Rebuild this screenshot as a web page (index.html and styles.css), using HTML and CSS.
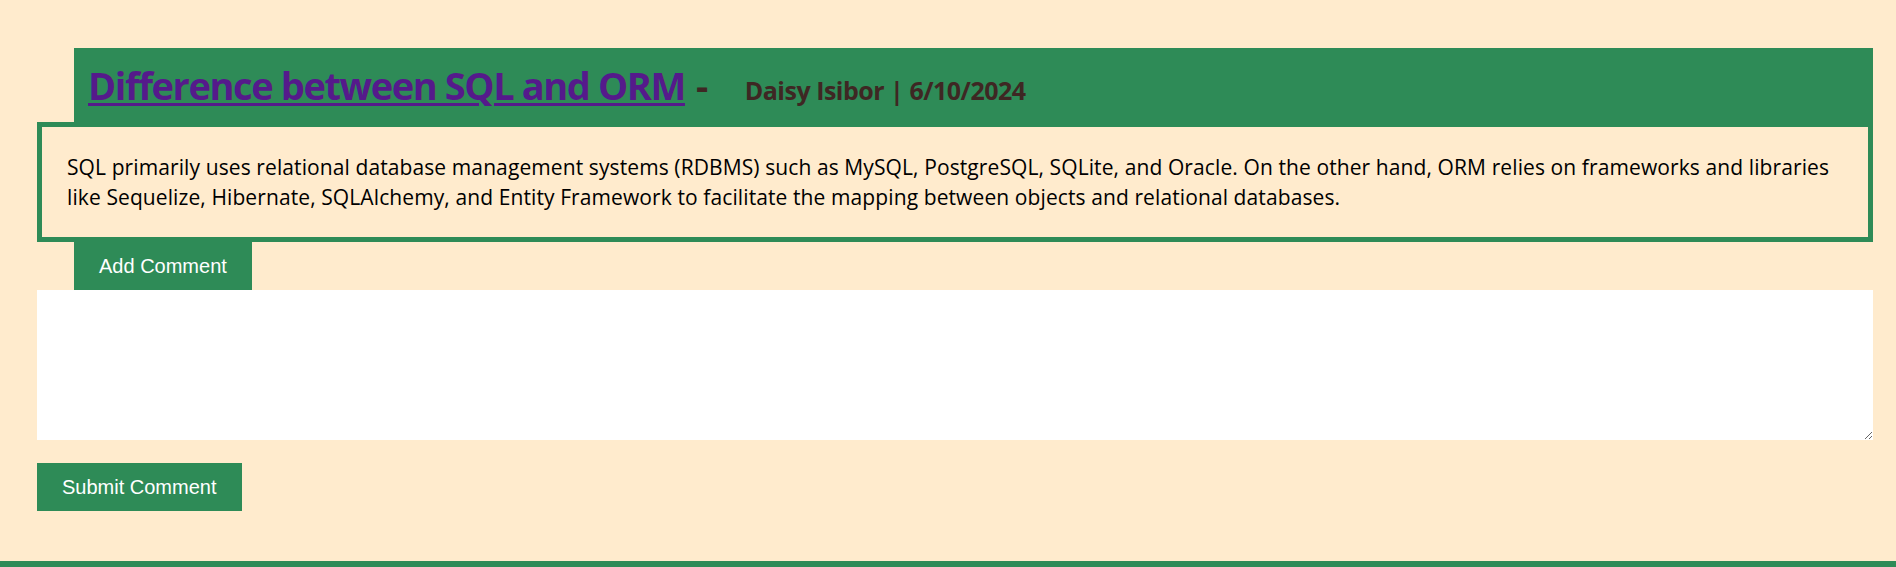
FILE: index.html
```html
<!DOCTYPE html>
<html lang="en">
<head>
<meta charset="utf-8">
<title>Difference between SQL and ORM</title>
<link rel="stylesheet" href="styles.css">
</head>
<body>
<main class="page">
  <article class="post">
    <header class="post-header">
      <h1 class="post-title"><a class="post-link" href="#">Difference between SQL and ORM</a><span class="post-dash">-</span><span class="post-meta">Daisy Isibor | 6/10/2024</span></h1>
    </header>
    <div class="post-body">
      <p class="post-text">SQL primarily uses relational database management systems (RDBMS) such as MySQL, PostgreSQL, SQLite, and Oracle. On the other hand, ORM relies on frameworks and libraries like Sequelize, Hibernate, SQLAlchemy, and Entity Framework to facilitate the mapping between objects and relational databases.</p>
    </div>
    <button class="btn btn-add" type="button">Add Comment</button>
    <textarea class="comment-input"></textarea>
    <button class="btn btn-submit" type="button">Submit Comment</button>
  </article>
</main>
<footer class="site-footer"></footer>
</body>
</html>
```
FILE: styles.css
```css
html, body {
  margin: 0;
  padding: 0;
  background: #ffebcd;
}

body {
  font-family: "Open Sans", "Noto Sans", sans-serif;
  overflow: hidden;
}

.page {
  padding: 48px 23px 0 37px;
}

.post {
  display: flex;
  flex-direction: column;
  align-items: flex-start;
}

.post-header {
  align-self: stretch;
  margin-left: 37px;
  height: 74px;
  background: #2e8b57;
  display: flex;
  align-items: center;
  padding: 0 14px;
}

.post-title {
  margin: 0;
  font-size: 38px;
  font-weight: 700;
  line-height: 1;
  color: #3e2723;
  display: flex;
  align-items: baseline;
  letter-spacing: -1.4px;
}

.post-link {
  color: #551a8b;
  text-decoration: underline;
  text-decoration-thickness: 3px;
  text-underline-offset: 3px;
}

.post-dash {
  margin-left: 11px;
}

.post-meta {
  margin-left: 38px;
  font-size: 25px;
  letter-spacing: -0.5px;
}

.post-body {
  align-self: stretch;
  border: 5px solid #2e8b57;
  padding: 25px;
}

.post-text {
  margin: 0;
  font-size: 21px;
  line-height: 30px;
  color: #000;
  letter-spacing: 0.1px;
}

.btn {
  font-family: "Liberation Sans", Arial, sans-serif;
  font-size: 20px;
  line-height: 23px;
  color: #fff;
  background: #2e8b57;
  border: none;
  padding: 12.5px 25px;
  cursor: pointer;
}

.btn-add {
  margin-left: 37px;
}

.comment-input {
  align-self: stretch;
  display: block;
  box-sizing: border-box;
  height: 150px;
  border: none;
  background: #fff;
  margin: 0;
  padding: 2px;
  font-size: 16px;
}

.btn-submit {
  margin-top: 23px;
}

.site-footer {
  margin-top: 50px;
  height: 60px;
  background: #2e8b57;
}
```
